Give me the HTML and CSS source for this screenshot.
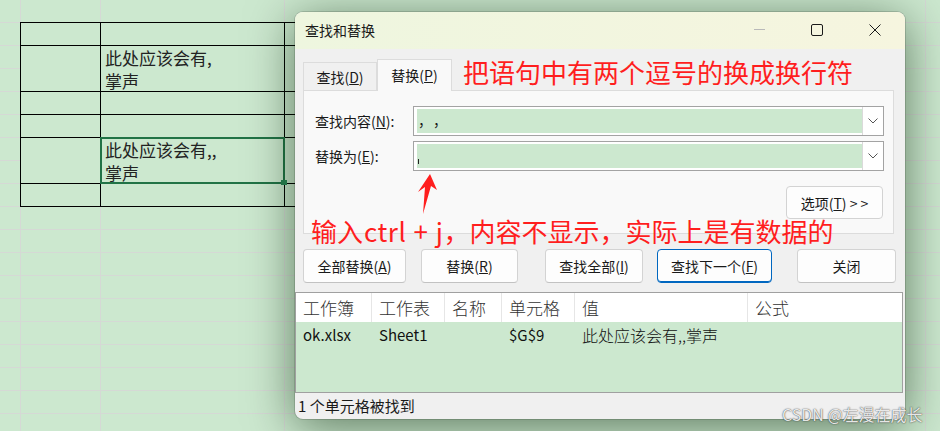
FILE: index.html
```html
<!DOCTYPE html>
<html lang="zh-CN">
<head>
<meta charset="utf-8">
<title>查找和替换</title>
<link rel="stylesheet" href="styles.css">
</head>
<body>
<div class="sheet">
  <div class="grid">
    <div class="row h1"><div class="cell ca"></div><div class="cell cb"></div><div class="cell cc"></div></div>
    <div class="row h2"><div class="cell ca"></div><div class="cell cb"><div class="ctext">此处应该会有,<br>掌声</div></div><div class="cell cc"></div></div>
    <div class="row h1"><div class="cell ca"></div><div class="cell cb"></div><div class="cell cc"></div></div>
    <div class="row h1"><div class="cell ca"></div><div class="cell cb"></div><div class="cell cc"></div></div>
    <div class="row h2"><div class="cell ca"></div><div class="cell cb sel"><div class="ctext">此处应该会有,,<br>掌声</div></div><div class="cell cc"></div></div>
    <div class="row h1"><div class="cell ca"></div><div class="cell cb"></div><div class="cell cc"></div></div>
  </div>
</div>

<div class="dialog">
  <div class="titlebar">
    <div class="title">查找和替换</div>
    <div class="ctrl"><span class="minline"></span></div>
    <div class="ctrl">
      <svg width="12" height="12" viewBox="0 0 12 12"><rect x="0.5" y="0.5" width="11" height="11" rx="1.5" fill="none" stroke="#1a1a1a" stroke-width="1"/></svg>
    </div>
    <div class="ctrl close">
      <svg width="12" height="12" viewBox="0 0 12 12"><path d="M0.5 0.5 L11.5 11.5 M11.5 0.5 L0.5 11.5" stroke="#1a1a1a" stroke-width="1" fill="none"/></svg>
    </div>
  </div>

  <div class="tabs">
    <div class="tab">查找(<u>D</u>)</div>
    <div class="tab active">替换(<u>P</u>)</div>
  </div>

  <div class="panel">
    <div class="field">
      <div class="label">查找内容(<u>N</u>):</div>
      <div class="combo">
        <div class="ctext-in"><span class="fw">，</span><span class="fw">，</span></div>
        <div class="drop"><svg width="10" height="6" viewBox="0 0 10 6"><path d="M0.5 0.5 L5 5 L9.5 0.5" fill="none" stroke="#555" stroke-width="1"/></svg></div>
      </div>
    </div>
    <div class="field">
      <div class="label">替换为(<u>E</u>):</div>
      <div class="combo">
        <div class="ctext-in"><span class="lf"></span></div>
        <div class="drop"><svg width="10" height="6" viewBox="0 0 10 6"><path d="M0.5 0.5 L5 5 L9.5 0.5" fill="none" stroke="#555" stroke-width="1"/></svg></div>
      </div>
    </div>
    <div class="opts">
      <div class="optbtn">选项(<u>T</u>) &gt; &gt;</div>
    </div>
  </div>

  <div class="buttons">
    <div class="btn b1">全部替换(<u>A</u>)</div>
    <div class="btn b2">替换(<u>R</u>)</div>
    <div class="btn b3">查找全部(<u>I</u>)</div>
    <div class="btn b4 default">查找下一个(<u>F</u>)</div>
    <div class="btn b5">关闭</div>
  </div>

  <div class="results">
    <div class="thead">
      <div class="th w1">工作簿</div>
      <div class="th w2">工作表</div>
      <div class="th w3">名称</div>
      <div class="th w4">单元格</div>
      <div class="th w5">值</div>
      <div class="th w6">公式</div>
    </div>
    <div class="tr">
      <div class="td w1">ok.xlsx</div>
      <div class="td w2">Sheet1</div>
      <div class="td w3"></div>
      <div class="td w4">$G$9</div>
      <div class="td w5 cjk">此处应该会有,,掌声</div>
      <div class="td w6"></div>
    </div>
  </div>

  <div class="status">1 个单元格被找到</div>

  <div class="note note1">把语句中有两个逗号的换成换行符</div>
  <div class="note note2">输入<span class="latin">ctrl + j</span>，内容不显示，实际上是有数据的</div>
  <svg class="arrow" width="40" height="60" viewBox="0 0 40 60">
    <polygon points="25,12 32,28 26,24 18,52 20,25 13,30" fill="#ff1e1e"/>
  </svg>
</div>

<div class="watermark">CSDN @左漫在成长</div>
</body>
</html>
```

FILE: styles.css
```css
* { box-sizing: border-box; }
html, body { margin: 0; padding: 0; }
body {
  width: 940px;
  height: 431px;
  overflow: hidden;
  position: relative;
  font-family: "Noto Sans CJK SC", sans-serif;
  color: #1a1a1a;
  background-color: #cce8cf;
  background-image:
    linear-gradient(to right, transparent 20px, #d5d9d5 20px 21px, transparent 21px 100px, #d5d9d5 100px 101px, transparent 101px 284px, #d5d9d5 284px 285px, transparent 285px 925px, #d5d9d5 925px 926px, transparent 926px),
    repeating-linear-gradient(to bottom, transparent 0 22px, #d5d9d5 22px 23px);
}

/* spreadsheet */
.sheet { padding: 22px 0 0 20px; }
.grid { display: flex; flex-direction: column; border-top: 1px solid #000; width: 400px; }
.row { display: flex; }
.row.h1 { height: 23px; }
.row.h2 { height: 46px; }
.cell {
  background: #cce8cf;
  border-right: 1px solid #000;
  border-bottom: 1px solid #000;
}
.ca { width: 81px; border-left: 1px solid #000; }
.cb { width: 184px; }
.cc { width: 135px; }
.ctext {
  font-size: 17px;
  line-height: 23px;
  padding-left: 4px;
  color: #222;
}
.sel { position: relative; }
.sel::after {
  content: "";
  position: absolute;
  left: -1px; top: -1px; right: -1px; bottom: -1px;
  border: 2px solid #217346;
}
.sel::before {
  content: "";
  position: absolute;
  right: -3px; bottom: -2px;
  width: 6px; height: 5px;
  background: #217346;
  z-index: 2;
}

/* dialog */
.dialog {
  position: absolute;
  left: 295px;
  top: 12px;
  width: 610px;
  height: 407px;
  background: #f0f0f0;
  border-radius: 8px;
  overflow: hidden;
  box-shadow: 0 8px 48px rgba(0, 30, 0, 0.55), 0 0 0 1px rgba(0, 0, 0, 0.14);
  display: flex;
  flex-direction: column;
}
.titlebar {
  height: 37px;
  flex: none;
  display: flex;
  align-items: center;
  padding-left: 10px;
  padding-bottom: 2px;
  background: linear-gradient(to right, #eef6df, #f6f5df);
  font-size: 14px;
}
.title { flex: 1; }
.ctrl {
  width: 58px;
  height: 35px;
  display: flex;
  align-items: center;
  justify-content: center;
}
.ctrl.close { margin-right: 1px; }
.minline { width: 11px; height: 1px; background: #b9b9b9; }

.tabs {
  height: 41px;
  flex: none;
  display: flex;
  align-items: flex-end;
  padding-left: 8px;
  position: relative;
  z-index: 1;
}
.tab {
  width: 74px;
  height: 28px;
  border: 1px solid #dcdcdc;
  border-bottom: none;
  background: #f0f0f0;
  font-size: 14px;
  display: flex;
  align-items: center;
  justify-content: center;
}
.tab.active {
  width: 75px;
  height: 32px;
  margin-bottom: -1px;
  background: #f9f9f9;
  padding-bottom: 2px;
}

.panel {
  height: 144px;
  flex: none;
  margin: 0 11px 0 8px;
  border: 1px solid #dcdcdc;
  background: #f9f9f9;
  padding: 15px 9px 0 11px;
}
.field { display: flex; align-items: center; height: 30px; }
.field + .field { margin-top: 5px; }
.label { width: 98px; font-size: 14px; }
.combo {
  flex: 1;
  height: 30px;
  border: 1px solid #a3a3a3;
  background: #fff;
  display: flex;
}
.ctext-in {
  flex: 1;
  margin: 2px 0 2px 3px;
  background: #cce8cf;
  font-size: 14px;
  line-height: 22px;
  position: relative;
  display: flex;
}
.fw { width: 15px; display: block; padding-left: 1px; }
.lf {
  position: absolute;
  left: 1px;
  top: 15px;
  width: 1px;
  height: 5px;
  background: #222;
}
.drop {
  width: 21px;
  border-left: 1px solid #dadada;
  display: flex;
  align-items: center;
  justify-content: center;
}
.opts { display: flex; justify-content: flex-end; margin-top: 15px; padding-right: 1px; }
.optbtn {
  width: 97px;
  height: 33px;
  border: 1px solid #d3d3d3;
  border-radius: 4px;
  background: #fdfdfd;
  font-size: 14px;
  display: flex;
  align-items: center;
  justify-content: center;
}

.buttons {
  display: flex;
  flex: none;
  margin-top: 15px;
  padding-left: 8px;
  height: 34px;
}
.btn {
  height: 34px;
  border: 1px solid #d3d3d3;
  border-bottom-color: #c2c2c2;
  border-radius: 4px;
  background: #fdfdfd;
  font-size: 14px;
  display: flex;
  align-items: center;
  justify-content: center;
}
.b1 { width: 103px; }
.b2 { width: 97px; margin-left: 15px; }
.b3 { width: 98px; margin-left: 27px; }
.b4 { width: 115px; margin-left: 14px; }
.b5 { width: 99px; margin-left: 25px; }
.btn.default { border: 1px solid #0067c0; box-shadow: inset 0 -1px 0 #0067c0; }

.results {
  margin-top: 9px;
  margin-right: 2px;
  height: 101px;
  flex: none;
  border: 1px solid #a0a0a0;
  background: #cce8cf;
  display: flex;
  flex-direction: column;
}
.thead { height: 29px; background: #fff; display: flex; }
.th {
  border-right: 1px solid #e6e6e6;
  padding-left: 7px;
  font-size: 17px;
  font-weight: 300;
  line-height: 29px;
  color: #333;
}
.tr { height: 26px; display: flex; }
.td {
  padding-left: 7px;
  font-size: 15px;
  line-height: 26px;
  color: #111;
  border-right: 1px solid transparent;
}
.td.cjk { font-size: 16px; font-weight: 300; }
.w1 { width: 76px; }
.w2 { width: 73px; }
.w3 { width: 57px; }
.w4 { width: 73px; }
.w5 { width: 173px; }
.w6 { flex: 1; border-right: none; }

.status {
  height: 26px;
  flex: none;
  font-size: 15px;
  line-height: 26px;
  padding-left: 3px;
}

.note {
  position: absolute;
  color: #ff1e1e;
  font-size: 26px;
  line-height: 30px;
  white-space: nowrap;
}
.note .latin { letter-spacing: 0.5px; word-spacing: 1px; padding-left: 1px; }
.note1 { left: 168px; top: 45px; }
.note2 { left: 16px; top: 204px; }
.arrow { position: absolute; left: 110px; top: 150px; }

.watermark {
  position: absolute;
  left: 782px;
  top: 403px;
  font-size: 16px;
  line-height: 22px;
  color: rgba(255, 255, 255, 0.9);
  text-shadow: 0 0 1px rgba(40, 40, 40, 0.9), 0 0 2px rgba(40, 40, 40, 0.4);
  white-space: nowrap;
}
```
